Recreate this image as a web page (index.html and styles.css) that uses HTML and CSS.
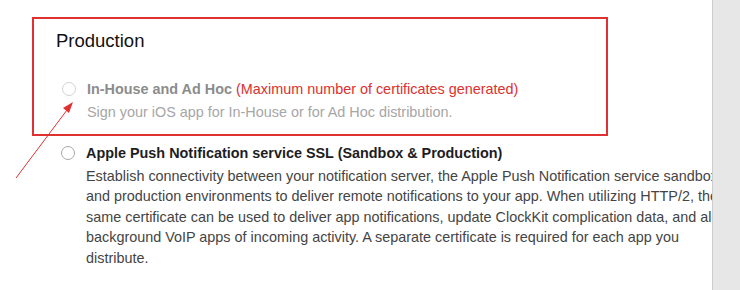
FILE: index.html
```html
<!DOCTYPE html>
<html lang="en">
<head>
  <meta charset="UTF-8" />
  <meta name="viewport" content="width=device-width, initial-scale=1.0" />
  <title>Certificate type</title>
  <link rel="stylesheet" href="styles.css">
</head>
<body>
  <div class="page">
    <div class="main">
      <div class="highlight">
        <h2>Production</h2>
        <div class="option disabled">
          <span class="radio"></span>
          <div class="option-body">
            <div class="option-title">In-House and Ad Hoc <span class="warning">(Maximum number of certificates generated)</span></div>
            <div class="option-desc">Sign your iOS app for In-House or for Ad Hoc distribution.</div>
          </div>
        </div>
      </div>

      <div class="option">
        <span class="radio"></span>
        <div class="option-body">
          <div class="option-title">Apple Push Notification service SSL (Sandbox &amp; Production)</div>
          <div class="option-desc">Establish connectivity between your notification server, the Apple Push Notification service sandbox and production environments to deliver remote notifications to your app. When utilizing HTTP/2, the same certificate can be used to deliver app notifications, update ClockKit complication data, and alert background VoIP apps of incoming activity. A separate certificate is required for each app you distribute.</div>
        </div>
      </div>
    </div>
    <div class="sidebar"></div>

    <!-- annotation arrow pointing at the disabled radio -->
    <svg class="arrow" width="100" height="200" viewBox="0 0 100 200">
      <line x1="16" y1="178" x2="67" y2="110" stroke="#e03131" stroke-width="1" />
      <polygon points="73,102 63,108 69,113" fill="#e03131" />
    </svg>
  </div>
</body>
</html>
```

FILE: styles.css
```css
body {
  margin: 0;
  font-family: 'Liberation Sans', Arial, sans-serif;
  background: #ffffff;
  color: #1d1d1f;
}

.page {
  position: relative;
  display: flex;
  height: 290px;
  overflow: hidden;
}

.main {
  flex: 1;
  min-width: 0;
  overflow: hidden;
  padding: 17px 0 0 32px;
}

.sidebar {
  flex: none;
  width: 27px;
  background: #e7e7e7;
  border-left: 1px solid #cdcdcd;
}

.highlight {
  box-sizing: border-box;
  width: 576px;
  border: 2px solid #e03131;
  padding: 11px 0 11px 22px;
}

h2 {
  margin: 0 0 26px;
  font-size: 18.5px;
  line-height: 22px;
  font-weight: 400;
  color: #111;
}

.option {
  display: flex;
  gap: 11px;
  margin-left: 29px;
}

.highlight .option {
  margin-left: 6px;
}

.highlight + .option {
  margin-top: 6px;
}

.radio {
  flex: none;
  width: 12px;
  height: 12px;
  margin-top: 4px;
  border: 1px solid #a8a8a8;
  border-radius: 50%;
  background: #fff;
}

.option-body {
  flex: none;
  width: 645px;
}

.option-title {
  font-size: 14.4px;
  line-height: 22px;
  font-weight: 700;
  color: #1d1d1f;
}

.option-desc {
  margin-top: 2px;
  font-size: 14.4px;
  line-height: 20.5px;
  color: #444;
}

.disabled .radio {
  border-color: #d2d2d2;
}

.disabled .option-title {
  color: #8c8c8c;
}

.disabled .option-desc {
  color: #a6a6a6;
}

.warning {
  font-weight: 400;
  color: #dc2f2f;
}

.arrow {
  position: absolute;
  left: 0;
  top: 0;
}
```
